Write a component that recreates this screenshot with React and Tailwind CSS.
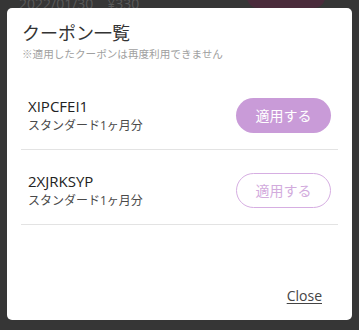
import React from "react";

const coupons = [
  { code: "XIPCFEI1", plan: "スタンダード1ヶ月分", active: true },
  { code: "2XJRKSYP", plan: "スタンダード1ヶ月分", active: false },
];

const CouponRow = ({ coupon }) => (
  <div className="flex items-center justify-between h-[75px] pt-[6px] border-b border-[#e3e3e3] pl-[7px] pr-[7px]">
    <div className="flex flex-col gap-[2px]">
      <span className="text-[15px] leading-[20px] font-medium text-[#222]">{coupon.code}</span>
      <span className="text-[12px] leading-[16px] text-[#4a4a4a]">{coupon.plan}</span>
    </div>
    <button
      className={`w-[95px] h-[35px] rounded-full text-[14px] ${
        coupon.active
          ? "bg-[#c99bd8] text-white"
          : "border border-[#d6aee2] text-[#d2abdd] bg-white"
      }`}
    >
      適用する
    </button>
  </div>
);

export default function App() {
  return (
    <div
      className="relative w-[359px] h-[330px] overflow-hidden bg-[#363636] pt-[8px] px-[7px]"
      style={{ fontFamily: '"Open Sans", "Noto Sans CJK JP", sans-serif' }}
    >
      {/* 背景の画面 */}
      <div className="absolute top-[-7px] left-[19px] text-[14px] text-[#5a5a5a]">2022/01/30　¥330</div>
      <div className="absolute top-[-14px] left-[247px] w-[78px] h-[22px] rounded-full bg-[#4a2b3b]" />

      <div className="relative h-[312px] bg-white rounded-[5px] flex flex-col px-[14px]">
        <h2 className="mt-[12px] ml-[1px] text-[18px] leading-[26px] text-[#333]">クーポン一覧</h2>
        <p className="ml-[1px] mt-[1px] text-[10.6px] leading-[15px] text-[#a0a0a0]">※適用したクーポンは再度利用できません</p>

        <div className="mt-[13px] flex flex-col">
          {coupons.map((c) => (
            <CouponRow key={c.code} coupon={c} />
          ))}
        </div>

        <div className="mt-auto mb-[14px] flex justify-end pr-[16px]">
          <button className="text-[14px] text-[#444] underline underline-offset-2">Close</button>
        </div>
      </div>
    </div>
  );
}
